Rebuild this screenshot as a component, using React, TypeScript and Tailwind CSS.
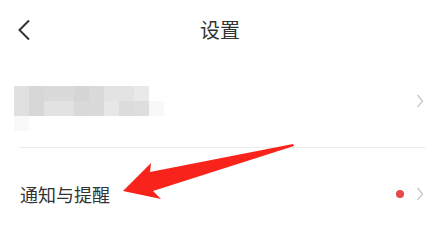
const mosaic = [
  ["bg-[#e0e0e0]", "bg-[#d7d7d7]", "bg-[#dadada]", "bg-[#dadada]", "bg-[#d5d5d5]", "bg-[#dadada]", "bg-[#e3e3e3]", "bg-[#e3e3e3]", "bg-[#e9e9e9]", "bg-white"],
  ["bg-[#e0e0e0]", "bg-[#d7d7d7]", "bg-[#e2e2e2]", "bg-[#e2e2e2]", "bg-[#d9d9d9]", "bg-[#dadada]", "bg-[#e7e7e7]", "bg-[#dcdcdc]", "bg-[#dedede]", "bg-[#f8f8f8]"],
  ["bg-[#f9f9f9]", "bg-white", "bg-white", "bg-white", "bg-white", "bg-white", "bg-white", "bg-white", "bg-white", "bg-white"],
];

function Chevron() {
  return (
    <svg width="8" height="14" viewBox="0 0 8 14" fill="none">
      <polyline points="1.5,1 6.5,7 1.5,13" stroke="#c9c9c9" strokeWidth="1.4" />
    </svg>
  );
}

export default function App() {
  return (
    <div
      className="relative w-[440px] h-[232px] overflow-hidden bg-white text-[#333]"
      style={{ fontFamily: '"Noto Sans CJK SC", "Noto Sans", sans-serif' }}
    >
      {/* Header */}
      <div className="relative h-[60px] flex items-center justify-center">
        <svg className="absolute left-[17px] top-[19px]" width="14" height="22" viewBox="0 0 14 22" fill="none">
          <polyline points="12,1.5 2.5,11 12,20.5" stroke="#333" strokeWidth="2" />
        </svg>
        <span className="text-[20px] leading-none">设置</span>
      </div>

      {/* Account row */}
      <div className="h-[87px] flex items-start justify-between pt-[26px] pl-[14px] pr-[16px]">
        <div className="flex flex-col">
          {mosaic.map((row, i) => (
            <div key={i} className="flex">
              {row.map((c, j) => (
                <div key={j} className={`w-[15px] h-[15px] ${c}`} />
              ))}
            </div>
          ))}
        </div>
        <div className="mt-[8px]">
          <Chevron />
        </div>
      </div>

      <div className="ml-[19px] mr-[14px] h-px bg-[#ededed]" />

      {/* Notification row */}
      <div className="h-[92px] flex items-center justify-between pl-[20px] pr-[16px]">
        <span className="text-[18px] leading-none">通知与提醒</span>
        <div className="flex items-center gap-[12px]">
          <span className="w-[8px] h-[8px] rounded-full bg-[#e5484d]" />
          <Chevron />
        </div>
      </div>

      {/* Annotation arrow */}
      <svg className="absolute left-0 top-0 pointer-events-none" width="440" height="232" viewBox="0 0 440 232">
        <polygon
          points="293,144 150,172 151,163 123,191 161,199 153,191 294,146"
          fill="#f8231b"
        />
      </svg>
    </div>
  );
}
